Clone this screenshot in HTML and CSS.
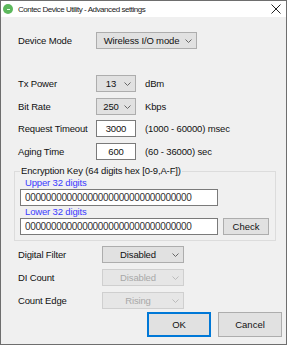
FILE: index.html
```html
<!DOCTYPE html>
<html lang="en">
<head>
  <meta charset="UTF-8" />
  <title>Contec Device Utility - Advanced settings</title>
  <link rel="stylesheet" href="styles.css">
</head>
<body>
  <div class="window">
    <div class="titlebar">
      <span class="app-icon"><span class="app-dot"></span></span>
      <span class="title">Contec Device Utility - Advanced settings</span>
      <svg class="close" width="10" height="10" viewBox="0 0 10 10">
        <path d="M0.5 0.5 L9.5 9.5 M9.5 0.5 L0.5 9.5" stroke="#222" stroke-width="1" fill="none"/>
      </svg>
    </div>

    <div class="content">
      <div class="row row-mode">
        <span class="label">Device Mode</span>
        <div class="combo combo-mode">Wireless I/O mode
          <svg class="chev" width="7" height="4" viewBox="0 0 7 4"><path d="M0.5 0.5 L3.5 3.5 L6.5 0.5" stroke="#666" fill="none"/></svg>
        </div>
      </div>

      <div class="row row-tx">
        <span class="label">Tx Power</span>
        <div class="combo combo-small">13
          <svg class="chev" width="7" height="4" viewBox="0 0 7 4"><path d="M0.5 0.5 L3.5 3.5 L6.5 0.5" stroke="#666" fill="none"/></svg>
        </div>
        <span class="unit">dBm</span>
      </div>

      <div class="row row-bit">
        <span class="label">Bit Rate</span>
        <div class="combo combo-small">250
          <svg class="chev" width="7" height="4" viewBox="0 0 7 4"><path d="M0.5 0.5 L3.5 3.5 L6.5 0.5" stroke="#666" fill="none"/></svg>
        </div>
        <span class="unit">Kbps</span>
      </div>

      <div class="row row-req">
        <span class="label">Request Timeout</span>
        <div class="field field-small">3000</div>
        <span class="unit">(1000 - 60000) msec</span>
      </div>

      <div class="row row-aging">
        <span class="label">Aging Time</span>
        <div class="field field-small">600</div>
        <span class="unit">(60 - 36000) sec</span>
      </div>

      <fieldset class="group">
        <legend>Encryption Key (64 digits hex [0-9,A-F])</legend>
        <div class="key-caption">Upper 32 digits</div>
        <div class="field field-key">00000000000000000000000000000000</div>
        <div class="key-caption">Lower 32 digits</div>
        <div class="key-row">
          <div class="field field-key">00000000000000000000000000000000</div>
          <button class="btn btn-check">Check</button>
        </div>
      </fieldset>

      <div class="row row-filter">
        <span class="label label-wide">Digital Filter</span>
        <div class="combo combo-wide">Disabled
          <svg class="chev" width="7" height="4" viewBox="0 0 7 4"><path d="M0.5 0.5 L3.5 3.5 L6.5 0.5" stroke="#666" fill="none"/></svg>
        </div>
      </div>

      <div class="row row-count">
        <span class="label label-wide">DI Count</span>
        <div class="combo combo-wide disabled">Disabled
          <svg class="chev" width="7" height="4" viewBox="0 0 7 4"><path d="M0.5 0.5 L3.5 3.5 L6.5 0.5" stroke="#bbb" fill="none"/></svg>
        </div>
      </div>

      <div class="row row-edge">
        <span class="label label-wide">Count Edge</span>
        <div class="combo combo-wide disabled">Rising
          <svg class="chev" width="7" height="4" viewBox="0 0 7 4"><path d="M0.5 0.5 L3.5 3.5 L6.5 0.5" stroke="#bbb" fill="none"/></svg>
        </div>
      </div>

      <div class="actions">
        <button class="btn btn-ok">OK</button>
        <button class="btn btn-cancel">Cancel</button>
      </div>
    </div>
  </div>
</body>
</html>
```

FILE: styles.css
```css
* {
  box-sizing: border-box;
}

body {
  margin: 0;
  font-family: "Liberation Sans", Arial, sans-serif;
  font-size: 9.5px;
  letter-spacing: -0.15px;
  color: #111;
}

.window {
  width: 287px;
  height: 345px;
  border: 1px solid #6e6e6e;
  background: #f0f0f0;
  display: flex;
  flex-direction: column;
}

/* title bar */
.titlebar {
  height: 16px;
  background: #fff;
  display: flex;
  align-items: center;
  padding: 0 4px 0 2px;
  flex-shrink: 0;
}

.app-icon {
  width: 10px;
  height: 10px;
  border-radius: 50%;
  background: #5cb85c;
  display: flex;
  align-items: center;
  justify-content: center;
}

.app-dot {
  width: 3px;
  height: 1px;
  background: #e8ffe8;
}

.title {
  margin-left: 5px;
  font-size: 8px;
  letter-spacing: -0.45px;
  color: #222;
  flex: 1;
}

.close {
  margin-right: 1px;
}

/* form */
.content {
  display: flex;
  flex-direction: column;
  flex: 1;
}

.row {
  display: flex;
  align-items: center;
  height: 17px;
  padding-left: 17px;
}

.row-mode { margin-top: 15px; }
.row-tx { margin-top: 26px; }
.row-bit { margin-top: 6px; }
.row-req { margin-top: 5px; }
.row-aging { margin-top: 6px; }
.row-filter { margin-top: 5px; }
.row-count { margin-top: 6px; }
.row-edge { margin-top: 6px; }

.label {
  width: 78px;
}

.label-wide {
  width: 84px;
}

.unit {
  margin-left: 9px;
}

.combo {
  position: relative;
  height: 17px;
  background: #e1e1e1;
  border: 1px solid #adadad;
  display: flex;
  align-items: center;
  justify-content: center;
  padding-right: 10px;
}

.combo .chev {
  position: absolute;
  right: 4px;
  top: 6px;
}

.combo-mode { width: 101px; }
.combo-small { width: 40px; }
.combo-wide { width: 82px; }

.combo.disabled {
  background: #e6e6e6;
  border-color: #cfcfcf;
  color: #a8a8a8;
}

.field {
  height: 17px;
  background: #fff;
  border: 1px solid #7a7a7a;
  display: flex;
  align-items: center;
}

.field-small {
  width: 40px;
  justify-content: center;
}

/* encryption group */
.group {
  margin: 5px 10px 0 13px;
  padding: 0 5px 5px 5px;
  border: 1px solid #dcdcdc;
  min-width: 0;
}

.group legend {
  padding: 0 1px;
  margin-left: 0;
  line-height: 12px;
}

.key-caption {
  color: #3a3aff;
  line-height: 12px;
  padding-left: 5px;
}

.field-key {
  width: 198px;
  padding-left: 4px;
  font-size: 10px;
  letter-spacing: -0.36px;
  color: #333;
}

.key-row {
  display: flex;
  align-items: center;
}

/* buttons */
.btn {
  font-family: inherit;
  font-size: 9.5px;
  color: #111;
  background: #e1e1e1;
  border: 1px solid #adadad;
  padding: 0;
}

.btn-check {
  width: 46px;
  height: 17px;
  margin-left: 5px;
}

.actions {
  display: flex;
  justify-content: flex-end;
  gap: 7px;
  margin-top: 3px;
  padding-right: 4px;
}

.btn-ok,
.btn-cancel {
  width: 64px;
  height: 25px;
}

.btn-ok {
  border: 2px solid #0078d7;
}
```
